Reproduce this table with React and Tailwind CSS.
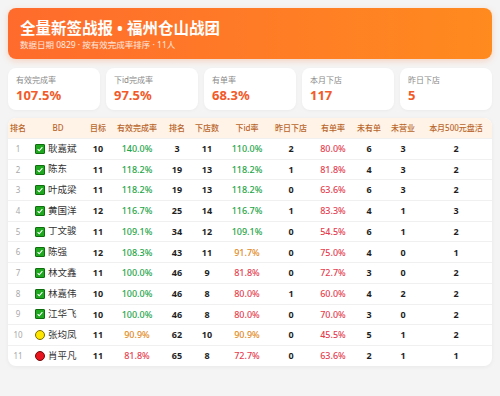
import React from 'react';

const rows = [
  [1, 'ok', '耿嘉斌', 10, '140.0%', 3, 11, '110.0%', 2, '80.0%', 6, 3, 2],
  [2, 'ok', '陈东', 11, '118.2%', 19, 13, '118.2%', 1, '81.8%', 4, 3, 2],
  [3, 'ok', '叶成梁', 11, '118.2%', 19, 13, '118.2%', 0, '63.6%', 6, 3, 2],
  [4, 'ok', '黄国洋', 12, '116.7%', 25, 14, '116.7%', 1, '83.3%', 4, 1, 3],
  [5, 'ok', '丁文骏', 11, '109.1%', 34, 12, '109.1%', 0, '54.5%', 6, 1, 2],
  [6, 'ok', '陈强', 12, '108.3%', 43, 11, '91.7%', 0, '75.0%', 4, 0, 1],
  [7, 'ok', '林文鑫', 11, '100.0%', 46, 9, '81.8%', 0, '72.7%', 3, 0, 2],
  [8, 'ok', '林嘉伟', 10, '100.0%', 46, 8, '80.0%', 1, '60.0%', 4, 2, 2],
  [9, 'ok', '江华飞', 10, '100.0%', 46, 8, '80.0%', 0, '70.0%', 3, 0, 2],
  [10, 'warn', '张均凤', 11, '90.9%', 62, 10, '90.9%', 0, '45.5%', 5, 1, 2],
  [11, 'bad', '肖平凡', 11, '81.8%', 65, 8, '72.7%', 0, '63.6%', 2, 1, 1],
];

const stats = [
  ['有效完成率', '107.5%'],
  ['下id完成率', '97.5%'],
  ['有单率', '68.3%'],
  ['本月下店', '117'],
  ['昨日下店', '5'],
];

const heads = ['排名', 'BD', '目标', '有效完成率', '排名', '下店数', '下id率', '昨日下店', '有单率', '未有单', '未营业', '本月500元盘活'];
const widths = ['w-[20px]', 'w-[60px]', 'w-[20px]', 'w-[58px]', 'w-[22px]', 'w-[38px]', 'w-[42px]', 'w-[46px]', 'w-[38px]', 'w-[34px]', 'w-[34px]', 'w-[72px]'];

function rateColor(v) {
  const n = parseFloat(v);
  if (n >= 100) return 'text-[#22a447]';
  if (n >= 85) return 'text-[#e2891a]';
  return 'text-[#e5404f]';
}

function StatusIcon({ kind }) {
  if (kind === 'ok') {
    return (
      <span className="inline-flex items-center justify-center w-[10px] h-[10px] rounded-[1px] bg-[#1fa81f] border border-[#0e6e0e] shrink-0">
        <svg viewBox="0 0 10 10" className="w-[8px] h-[8px]">
          <path d="M2 5.2 L4 7.2 L8 2.8" fill="none" stroke="white" strokeWidth="1.4" />
        </svg>
      </span>
    );
  }
  if (kind === 'warn') {
    return <span className="inline-block w-[10px] h-[10px] rounded-full bg-[#ffe600] border border-[#7a6a00] shrink-0" />;
  }
  return <span className="inline-block w-[10px] h-[10px] rounded-full bg-[#e8141e] border border-[#6e0a0a] shrink-0" />;
}

export default function App() {
  return (
    <div className="w-[500px] h-[396px] bg-[#f4f4f4] p-2 font-['Noto_Sans','Noto_Sans_CJK_SC',sans-serif] overflow-hidden">
      <div className="rounded-lg bg-gradient-to-r from-[#ff6b2c] to-[#ff8a1e] px-3 pt-[11px] pb-[8px] shadow-[0_2px_6px_rgba(255,110,40,0.25)]">
        <div className="text-white font-bold text-[15.5px] leading-[19px]">全量新签战报 • 福州仓山战团</div>
        <div className="text-white/85 text-[8.5px] leading-[13px]">数据日期 0829 · 按有效完成率排序 · 11人</div>
      </div>

      <div className="grid grid-cols-5 gap-[6px] mt-[9px]">
        {stats.map(([label, value]) => (
          <div key={label} className="bg-white rounded-lg px-2 pt-[6px] pb-[6px] shadow-[0_1px_3px_rgba(0,0,0,0.04)]">
            <div className="text-[8px] leading-[12px] text-[#8a8a8a]">{label}</div>
            <div className="text-[13px] leading-[18px] font-bold text-[#f25a29]">{value}</div>
          </div>
        ))}
      </div>

      <div className="mt-[8px] bg-white rounded-lg overflow-hidden shadow-[0_1px_4px_rgba(0,0,0,0.05)]">
        <table className="w-full table-fixed border-collapse">
          <colgroup>
            {widths.map((w, i) => <col key={i} className={w} />)}
          </colgroup>
          <thead>
            <tr className="bg-[#fff3e8] h-[20.5px]">
              {heads.map((h, i) => (
                <th key={i} className="text-[8px] font-medium text-[#b9662a] text-center whitespace-nowrap p-0">{h}</th>
              ))}
            </tr>
          </thead>
          <tbody>
            {rows.map((r) => (
              <tr key={r[0]} className="h-[20.7px] border-t border-[#f0f0f0]">
                <td className="text-center text-[8px] text-[#a8a8a8] p-0">{r[0]}</td>
                <td className="p-0 pl-[7px]">
                  <div className="flex items-center gap-[3px]">
                    <StatusIcon kind={r[1]} />
                    <span className="text-[9.5px] text-[#333]">{r[2]}</span>
                  </div>
                </td>
                <td className="text-center text-[9px] font-bold text-[#1f1f1f] p-0">{r[3]}</td>
                <td className={`text-center text-[9px] font-medium p-0 ${rateColor(r[4])}`}>{r[4]}</td>
                <td className="text-center text-[9px] font-bold text-[#1f1f1f] p-0">{r[5]}</td>
                <td className="text-center text-[9px] font-bold text-[#1f1f1f] p-0">{r[6]}</td>
                <td className={`text-center text-[9px] font-medium p-0 ${rateColor(r[7])}`}>{r[7]}</td>
                <td className="text-center text-[9px] font-bold text-[#1f1f1f] p-0">{r[8]}</td>
                <td className="text-center text-[9px] font-medium text-[#e5404f] p-0">{r[9]}</td>
                <td className="text-center text-[9px] font-bold text-[#1f1f1f] p-0">{r[10]}</td>
                <td className="text-center text-[9px] font-bold text-[#1f1f1f] p-0">{r[11]}</td>
                <td className="text-center text-[9px] font-bold text-[#1f1f1f] p-0">{r[12]}</td>
              </tr>
            ))}
          </tbody>
        </table>
      </div>
    </div>
  );
}
